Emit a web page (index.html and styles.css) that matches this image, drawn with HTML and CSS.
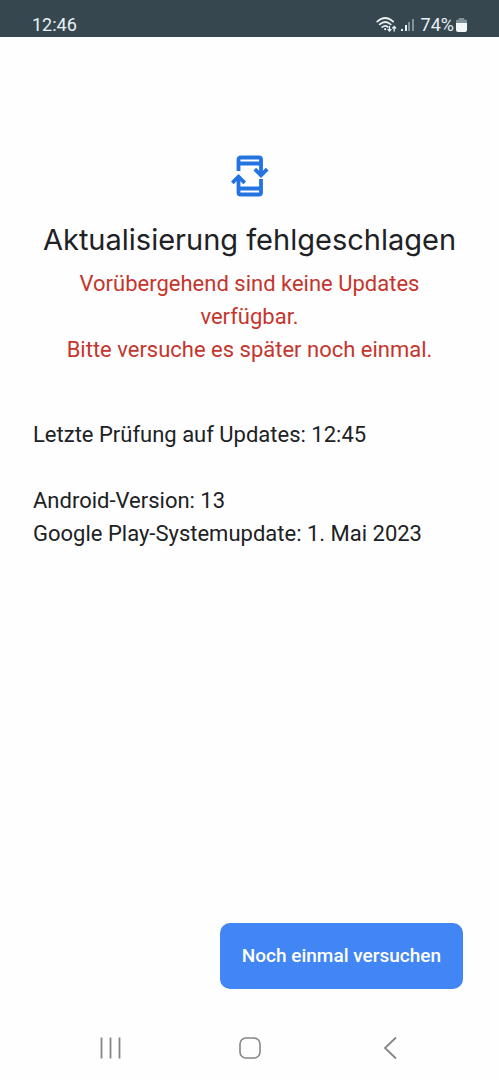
FILE: index.html
```html
<!DOCTYPE html>
<html lang="de">
<head>
<meta charset="utf-8">
<meta name="viewport" content="width=device-width, initial-scale=1">
<title>Aktualisierung fehlgeschlagen</title>
<link rel="stylesheet" href="styles.css">
</head>
<body>
<div class="screen">
  <header class="status">
    <time class="clock">12:46</time>
    <div class="indicators">
      <svg class="wifi" width="22" height="18" viewBox="0 0 22 18" fill="none" stroke="#e8f1f5" stroke-width="1.7" stroke-linecap="round" aria-hidden="true">
        <path d="M1.2 5.6Q9.2-1.6 17.2 5.6M3.7 8.4Q9.2 3.6 14.7 8.4M6.2 11.1Q9.2 8.6 11.8 10.9"/>
        <circle cx="9.2" cy="13.2" r="1.1" fill="#e8f1f5" stroke="none"/>
        <path stroke-width="1.3" d="M13.5 10.5V15M12 13.5L13.5 15L15 13.5M18.2 15V10.5M16.7 12L18.2 10.5L19.7 12"/>
      </svg>
      <svg class="signal" width="14" height="18" viewBox="0 0 14 18" aria-hidden="true">
        <path fill="#e8f1f5" d="M0 13h2v2H0zM4 9h2v6H4z"/>
        <path fill="#82929a" d="M7 6h2v9H7zM11 3h2v12h-2z"/>
      </svg>
      <span class="percent">74%</span>
      <svg class="battery" width="11" height="18" viewBox="0 0 11 18" aria-hidden="true">
        <path fill="#82929a" d="M3 2h5v1.500h1.500a1.500 1.500 0 0 1 1.500 1.500v2H0V5a1.500 1.500 0 0 1 1.500-1.500H3z"/>
        <path fill="#f2f7f9" d="M0 7h11v7a2 2 0 0 1-2 2H2a2 2 0 0 1-2-2z"/>
      </svg>
    </div>
  </header>

  <main class="content">
    <svg class="update-icon" width="38" height="42" viewBox="0 0 38 42" fill="none" stroke="#2374e1" stroke-width="3.800" aria-hidden="true">
      <path d="M7.500 16V4.500a2 2 0 0 1 2-2H28a2 2 0 0 1 2 2V19M7.500 8.500H30"/>
      <path d="M30 24V37.500a2 2 0 0 1-2 2H9.500a2 2 0 0 1-2-2V22M7.500 33.500H30"/>
      <path d="M23.800 14.200L30 20.400L36.200 14.200M1.300 27.800L7.500 21.600L13.700 27.800"/>
    </svg>
    <h1 class="title">Aktualisierung fehlgeschlagen</h1>
    <p class="error">Vorübergehend sind keine Updates verfügbar.<br>Bitte versuche es später noch einmal.</p>
    <div class="details">
      <p>Letzte Prüfung auf Updates: 12:45</p>
      <p class="versions">Android-Version: 13<br>Google Play-Systemupdate: 1. Mai 2023</p>
    </div>
  </main>

  <footer class="actions">
    <button class="retry" type="button">Noch einmal versuchen</button>
  </footer>

  <nav class="navbar" aria-label="Systemnavigation">
    <button type="button" aria-label="Letzte Apps"><svg width="24" height="24" viewBox="0 0 24 24" fill="none" stroke="#858585" stroke-width="1.800"><path d="M4.500 1.500V22.500M13.500 1.500V22.500M22.500 1.500V22.500"/></svg></button>
    <button type="button" aria-label="Startbildschirm"><svg width="24" height="24" viewBox="0 0 24 24" fill="none" stroke="#858585" stroke-width="1.600"><rect x="2" y="2" width="20" height="20" rx="6"/></svg></button>
    <button type="button" aria-label="Zurück"><svg width="24" height="24" viewBox="0 0 24 24" fill="none" stroke="#858585" stroke-width="1.800"><path d="M18 1.500L7 12L18 22.500"/></svg></button>
  </nav>
</div>
</body>
</html>
```
FILE: styles.css
```css
* {
  box-sizing: border-box;
}

body {
  margin: 0;
  background: #fefefe;
  color: #202124;
  font-family: Roboto, "Liberation Sans", sans-serif;
}

.screen {
  display: flex;
  flex-direction: column;
  min-height: 100vh;
}

.status {
  display: flex;
  align-items: center;
  justify-content: space-between;
  padding: 14px 32px 2px;
  background: #37474f;
  color: #e8f1f5;
  font-size: 18px;
  line-height: 21px;
}

.indicators {
  display: flex;
  align-items: center;
}

.signal {
  margin-left: 3px;
}

.percent {
  margin: 0 2px 0 6px;
}

.content {
  flex: 1;
  display: flex;
  flex-direction: column;
  align-items: center;
  padding: 118px 33px 24px;
}

.title {
  margin: 23px 0 0;
  font-family: Inter, Roboto, sans-serif;
  font-size: 29px;
  font-weight: 400;
  line-height: 40px;
  text-align: center;
}

.error,
.details {
  font-size: 22px;
  line-height: 33px;
}

.error {
  margin: 7px 0 0;
  color: #c5352d;
  text-align: center;
}

.details {
  align-self: stretch;
  margin-top: 52px;
}

.details p {
  margin: 0;
}

.details .versions {
  margin-top: 33px;
}

.actions {
  display: flex;
  justify-content: flex-end;
  padding: 0 36px;
}

.retry {
  padding: 17px 22px;
  border: 0;
  border-radius: 10px;
  background: #4285f4;
  color: #fff;
  font: 500 19px/32px Roboto, sans-serif;
}

.navbar {
  display: flex;
  justify-content: space-between;
  padding: 47px 97px 20px;
}

.navbar button {
  display: flex;
  padding: 0;
  border: 0;
  background: none;
}
```
